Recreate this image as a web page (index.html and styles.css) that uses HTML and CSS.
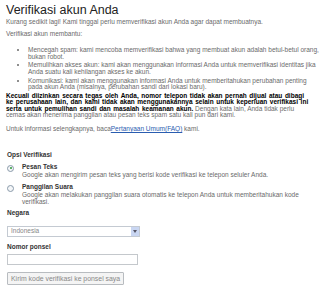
FILE: index.html
```html
<!DOCTYPE html>
<html lang="id">
<head>
    <meta charset="UTF-8">
    <title>Verifikasi akun Anda</title>
    <link rel="stylesheet" href="styles.css">
</head>
<body>
    <h1>Verifikasi akun Anda</h1>
    <p class="intro">Kurang sedikit lagi! Kami tinggal perlu memverifikasi akun Anda agar dapat membuatnya.</p>
    <p class="lead">Verifikasi akun membantu:</p>
    <ul class="reasons">
        <li>Mencegah spam: kami mencoba memverifikasi bahwa yang membuat akun adalah betul-betul orang, bukan robot.</li>
        <li>Memulihkan akses akun: kami akan menggunakan informasi Anda untuk memverifikasi identitas jika Anda suatu kali kehilangan akses ke akun.</li>
        <li>Komunikasi: kami akan menggunakan informasi Anda untuk memberitahukan perubahan penting pada akun Anda (misalnya, perubahan sandi dari lokasi baru).</li>
    </ul>
    <p class="privacy"><strong>Kecuali diizinkan secara tegas oleh Anda, nomor telepon tidak akan pernah dijual atau dibagi ke perusahaan lain, dan kami tidak akan menggunakannya selain untuk keperluan verifikasi ini serta untuk pemulihan sandi dan masalah keamanan akun.</strong> Dengan kata lain, Anda tidak perlu cemas akan menerima panggilan atau pesan teks spam satu kali pun dari kami.</p>
    <p class="more">Untuk informasi selengkapnya, baca<a href="#">Pertanyaan Umum(FAQ)</a> kami.</p>

    <div class="form">
        <div class="label">Opsi Verifikasi</div>
        <div class="option">
            <span class="radio checked"></span>
            <div>
                <div class="option-name">Pesan Teks</div>
                <div class="option-desc">Google akan mengirim pesan teks yang berisi kode verifikasi ke telepon seluler Anda.</div>
            </div>
        </div>
        <div class="option">
            <span class="radio"></span>
            <div>
                <div class="option-name">Panggilan Suara</div>
                <div class="option-desc">Google akan melakukan panggilan suara otomatis ke telepon Anda untuk memberitahukan kode verifikasi.</div>
            </div>
        </div>

        <div class="label country">Negara</div>
        <div class="select">
            <span>Indonesia</span>
            <span class="arrow">
                <svg width="4" height="3" viewBox="0 0 4 3"><path d="M0 0 L4 0 L2 3 Z" fill="#556"/></svg>
            </span>
        </div>

        <div class="label phone">Nomor ponsel</div>
        <div class="input"></div>

        <div class="button">Kirim kode verifikasi ke ponsel saya</div>
    </div>
</body>
</html>
```

FILE: styles.css
```css
body {
    margin: 0;
    padding: 3px 7px 0 6px;
    font-family: "Liberation Sans", Arial, sans-serif;
    font-size: 6.5px;
    line-height: 6.5px;
    color: #6a6a6a;
    background: #fff;
}
h1 {
    margin: 0;
    font-size: 12.5px;
    line-height: 15px;
    font-weight: normal;
    color: #222;
}
p {
    margin: 0;
}
.intro {
    margin-top: 1px;
}
.lead {
    margin-top: 5.5px;
}
.reasons {
    margin: 9.5px -7px 0 0;
    padding-left: 22px;
}
.reasons li {
    margin-bottom: 2.3px;
}
.privacy {
    margin-top: 0.5px;
}
.privacy strong {
    color: #000;
    word-spacing: 0.8px;
}
.more {
    margin-top: 7px;
}
.more a {
    color: #2a5db0;
}
.form {
    margin-top: 20px;
    padding-left: 1px;
}
.label {
    font-weight: bold;
    color: #333;
}
.option {
    display: flex;
    gap: 8px;
    margin-top: 5.5px;
}
.radio {
    flex: none;
    width: 5px;
    height: 5px;
    margin-top: 0.5px;
    border: 1px solid #8a9aaa;
    border-radius: 50%;
    background: #f4f6f8;
    display: flex;
    align-items: center;
    justify-content: center;
}
.radio.checked::after {
    content: "";
    width: 2px;
    height: 2px;
    border-radius: 50%;
    background: #2e9a3a;
}
.option-name {
    font-weight: bold;
    color: #333;
    margin-bottom: 1.5px;
}
.option-desc {
    padding-right: 3px;
}
.country {
    margin-top: 5px;
}
.select {
    margin-top: 9px;
    width: 128px;
    height: 9px;
    border: 1px solid #c4cad2;
    display: flex;
    justify-content: space-between;
    align-items: center;
    padding-left: 3px;
    color: #888;
}
.arrow {
    width: 8px;
    height: 9px;
    background: #c9d6f2;
    display: flex;
    align-items: center;
    justify-content: center;
}
.phone {
    margin-top: 7px;
}
.input {
    margin-top: 3.5px;
    width: 129px;
    height: 9px;
    border: 1px solid #c4c8cc;
}
.button {
    margin-top: 7px;
    display: inline-block;
    padding: 2px 3px;
    border: 1px solid #b8bcc0;
    border-radius: 1px;
    background: #f4f4f4;
    color: #888;
    font-size: 6.9px;
    line-height: 7px;
}
```
